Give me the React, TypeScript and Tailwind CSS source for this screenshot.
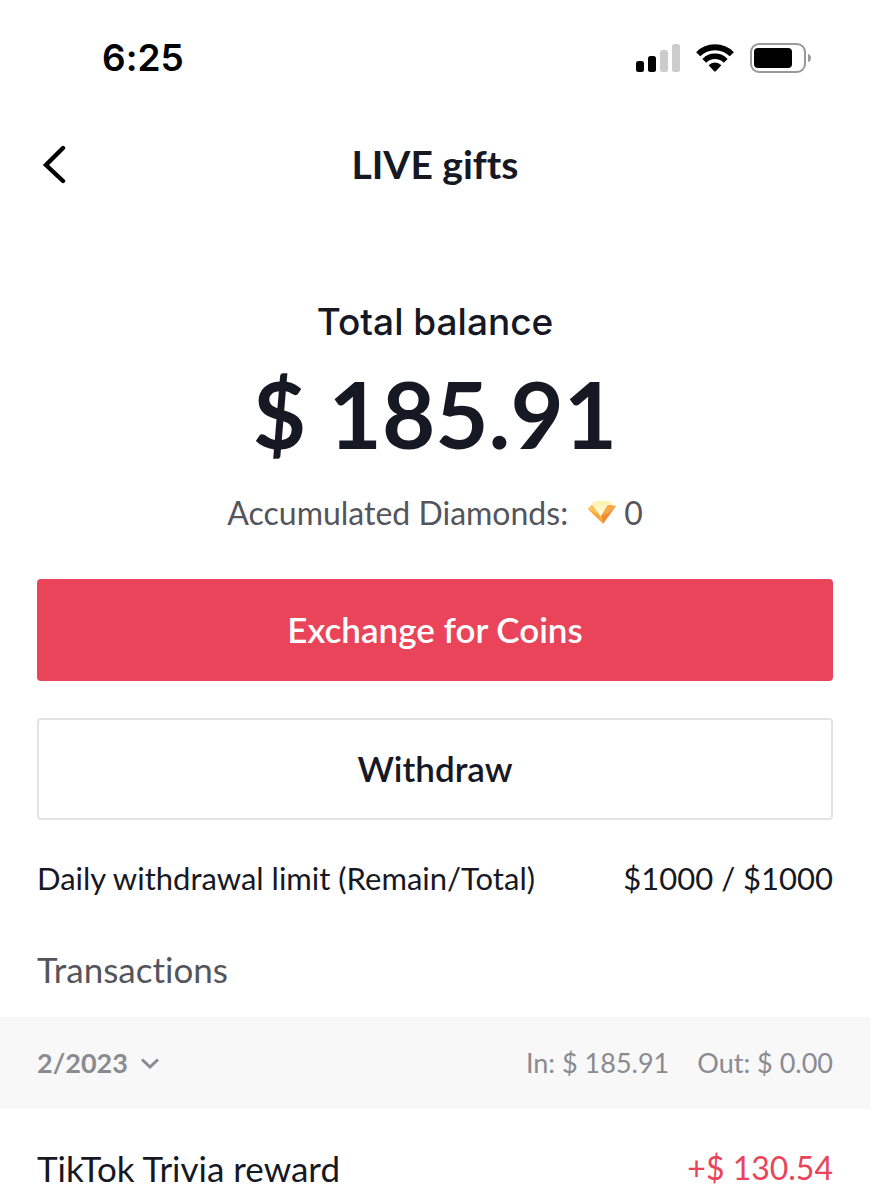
import { useState } from 'react';

interface Transaction {
  id: string;
  title: string;
  amount: string;
}

interface Month {
  label: string;
  income: string;
  outgoing: string;
  transactions: Transaction[];
}

const MONTHS: Month[] = [
  {
    label: '2/2023',
    income: '$ 185.91',
    outgoing: '$ 0.00',
    transactions: [{ id: 'trivia', title: 'TikTok Trivia reward', amount: '+$ 130.54' }],
  },
];

function SignalIcon() {
  return (
    <svg width="44" height="28" viewBox="0 0 44 28" aria-hidden="true">
      <rect x="0" y="17" width="8" height="11" rx="2.5" fill="#000" />
      <rect x="12" y="12" width="8" height="16" rx="2.5" fill="#000" />
      <rect x="24" y="6" width="8" height="22" rx="2.5" fill="#ccc" />
      <rect x="36" y="0" width="8" height="28" rx="2.5" fill="#ccc" />
    </svg>
  );
}

function WifiIcon() {
  return (
    <svg width="38" height="28" viewBox="0 0 38 28" fill="none" aria-hidden="true">
      <path d="M2.2 10.2A23.8 23.8 0 0 1 35.8 10.2" stroke="#000" strokeWidth="5.8" />
      <path d="M8.3 16.8A15 15 0 0 1 29.7 16.8" stroke="#000" strokeWidth="5.4" />
      <path d="M12.6 21.2A8.8 8.8 0 0 1 25.4 21.2L19.8 27.2Q19 28 18.2 27.2Z" fill="#000" />
    </svg>
  );
}

function BatteryIcon() {
  return (
    <svg width="62" height="30" viewBox="0 0 62 30" aria-hidden="true">
      <rect x="1" y="1" width="54" height="28" rx="8" fill="none" stroke="#999" strokeWidth="2" />
      <rect x="4" y="5" width="38" height="20" rx="4" fill="#000" />
      <path d="M58 11C62 12 62 18 58 19Z" fill="#999" />
    </svg>
  );
}

function DiamondIcon() {
  return (
    <svg width="28" height="24" viewBox="0 0 28 24" aria-hidden="true">
      <defs>
        <linearGradient id="diamond-top" x1="0" y1="0" x2="0" y2="1">
          <stop offset="0" stopColor="#fff1ac" />
          <stop offset="1" stopColor="#fffdf3" />
        </linearGradient>
      </defs>
      <path d="M2 6Q4 1 9 0H20Q25 1 24 4L13 16Z" fill="url(#diamond-top)" />
      <path d="M0 8L4 4L8 9L13 16L15 23Z" fill="#fba636" />
      <path d="M0 8L4 4L8 9L10 13Z" fill="#fdc35a" />
      <path d="M13 15L20 4L28 5L15 23Z" fill="#f08a2e" />
      <path d="M20 4L28 5L21 12L13 15Z" fill="#f9a849" />
    </svg>
  );
}

export default function App() {
  const [monthLabel, setMonthLabel] = useState(MONTHS[0].label);
  const month = MONTHS.find((m) => m.label === monthLabel) ?? MONTHS[0];

  return (
    <div className="min-h-screen bg-white font-['Lato','Liberation_Sans',sans-serif] text-[#161823] [font-variant-ligatures:none]">
      <div className="flex h-29 items-center justify-between pl-[102px] pr-[58px] text-black">
        <span className="font-['Inter',sans-serif] text-[37px] font-semibold">6:25</span>
        <div className="flex items-center gap-4">
          <SignalIcon />
          <WifiIcon />
          <BatteryIcon />
        </div>
      </div>

      <header className="grid h-24 grid-cols-[1fr_auto_1fr] items-center px-[37px]">
        <button type="button" aria-label="Back" className="justify-self-start px-1 py-2">
          <svg width="26" height="40" viewBox="0 0 26 40" fill="none" aria-hidden="true">
            <path d="M22 4L5 21L22 37" stroke="#000" strokeWidth="4.4" strokeLinecap="round" />
          </svg>
        </button>
        <h1 className="text-[39px] font-bold leading-10">LIVE gifts</h1>
      </header>

      <main>
        <section className="flex flex-col items-center px-[37px] pt-[90px]">
          <h2 className="font-['Inter',sans-serif] text-[37px] font-medium leading-10">Total balance</h2>
          <p className="mt-6 text-[92px] font-bold leading-24">$ 185.91</p>
          <p className="mt-[31px] flex items-center text-[32px] leading-10 text-[#54555c]">
            Accumulated Diamonds:
            <span className="ml-5 flex items-center gap-2">
              <DiamondIcon />0
            </span>
          </p>
          <button
            type="button"
            className="mt-[46px] w-full rounded bg-[#ea445a] pb-8 pt-[30px] text-[35px] font-semibold leading-10 text-white"
          >
            Exchange for Coins
          </button>
          <button
            type="button"
            className="mt-[37px] w-full rounded border-2 border-[#e3e3e4] pb-[30px] pt-7 text-[35px] font-semibold leading-10"
          >
            Withdraw
          </button>
        </section>

        <div className="mt-[38px] flex justify-between px-[37px] text-[31px] leading-10">
          <span>Daily withdrawal limit (Remain/Total)</span>
          <span>$1000 / $1000</span>
        </div>

        <section>
          <h2 className="mt-[51px] px-[37px] text-[35px] leading-10 text-[#54555c]">Transactions</h2>

          <div className="mt-7 flex items-center justify-between bg-[#f8f8f8] px-[37px] py-[26px] text-[27px] leading-10 text-[#8a8b91]">
            <label className="flex items-center gap-3">
              <select
                aria-label="Month"
                value={monthLabel}
                onChange={(e) => setMonthLabel(e.target.value)}
                className="appearance-none bg-transparent font-bold"
              >
                {MONTHS.map((m) => (
                  <option key={m.label}>{m.label}</option>
                ))}
              </select>
              <svg width="20" height="14" viewBox="0 0 20 14" fill="none" aria-hidden="true">
                <path d="M2 3.5L10 11L18 3.5" stroke="#8a8b91" strokeWidth="3" />
              </svg>
            </label>
            <div className="flex gap-7">
              <span>In: {month.income}</span>
              <span>Out: {month.outgoing}</span>
            </div>
          </div>

          <ul>
            {month.transactions.map((t) => (
              <li key={t.id} className="flex justify-between px-[37px] pt-[39px] text-[35px] leading-10">
                <span>{t.title}</span>
                <span className="text-[32px] text-[#ea445a]">{t.amount}</span>
              </li>
            ))}
          </ul>
        </section>
      </main>
    </div>
  );
}
